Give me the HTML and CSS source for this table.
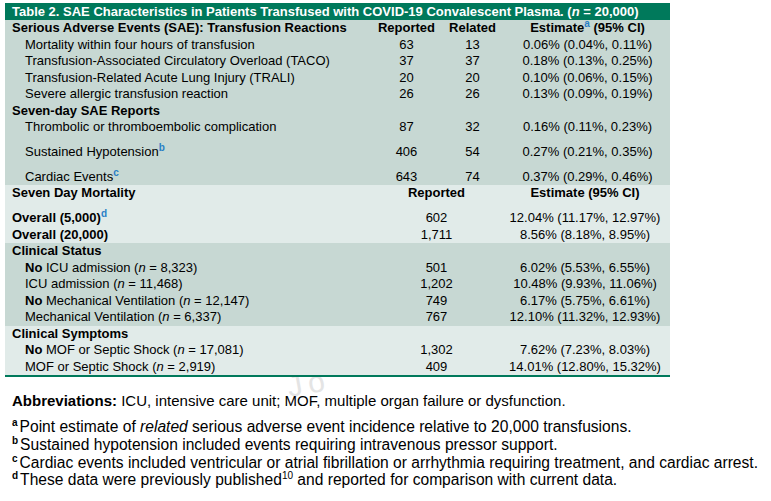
FILE: index.html
```html
<!DOCTYPE html>
<html>
<head>
<meta charset="utf-8">
<link rel="stylesheet" href="styles.css">
</head>
<body>
<div class="watermark">Jo</div>
<div class="tbl">
  <div class="title">Table 2. SAE Characteristics in Patients Transfused with COVID-19 Convalescent Plasma. (<i>n</i> = 20,000)</div>
  <div class="sec dark">
    <div class="row r4 hd"><span class="lbl">Serious Adverse Events (SAE): Transfusion Reactions</span><span class="c">Reported</span><span class="c">Related</span><span class="c">Estimate<sup>a</sup> (95% CI)</span></div>
    <div class="row r4"><span class="lbl ind">Mortality within four hours of transfusion</span><span class="c">63</span><span class="c">13</span><span class="c">0.06% (0.04%, 0.11%)</span></div>
    <div class="row r4"><span class="lbl ind">Transfusion-Associated Circulatory Overload (TACO)</span><span class="c">37</span><span class="c">37</span><span class="c">0.18% (0.13%, 0.25%)</span></div>
    <div class="row r4"><span class="lbl ind">Transfusion-Related Acute Lung Injury (TRALI)</span><span class="c">20</span><span class="c">20</span><span class="c">0.10% (0.06%, 0.15%)</span></div>
    <div class="row r4"><span class="lbl ind">Severe allergic transfusion reaction</span><span class="c">26</span><span class="c">26</span><span class="c">0.13% (0.09%, 0.19%)</span></div>
    <div class="row r4 hd"><span class="lbl">Seven-day SAE Reports</span><span></span><span></span><span></span></div>
    <div class="row r4"><span class="lbl ind">Thrombolic or thromboembolic complication</span><span class="c">87</span><span class="c">32</span><span class="c">0.16% (0.11%, 0.23%)</span></div>
    <div class="row r4 tall"><span class="lbl ind">Sustained Hypotension<sup>b</sup></span><span class="c">406</span><span class="c">54</span><span class="c">0.27% (0.21%, 0.35%)</span></div>
    <div class="row r4 tall"><span class="lbl ind">Cardiac Events<sup>c</sup></span><span class="c">643</span><span class="c">74</span><span class="c">0.37% (0.29%, 0.46%)</span></div>
  </div>
  <div class="sec light">
    <div class="row r3 hd"><span class="lbl">Seven Day Mortality</span><span class="c">Reported</span><span class="c">Estimate (95% CI)</span></div>
    <div class="row r3 tall b"><span class="lbl">Overall (5,000)<sup>d</sup></span><span class="c">602</span><span class="c">12.04% (11.17%, 12.97%)</span></div>
    <div class="row r3 b"><span class="lbl">Overall (20,000)</span><span class="c">1,711</span><span class="c">8.56% (8.18%, 8.95%)</span></div>
  </div>
  <div class="sec dark">
    <div class="row r3 hd"><span class="lbl">Clinical Status</span><span></span><span></span></div>
    <div class="row r3"><span class="lbl ind"><b>No</b> ICU admission (<i>n</i> = 8,323)</span><span class="c">501</span><span class="c">6.02% (5.53%, 6.55%)</span></div>
    <div class="row r3"><span class="lbl ind">ICU admission (<i>n</i> = 11,468)</span><span class="c">1,202</span><span class="c">10.48% (9.93%, 11.06%)</span></div>
    <div class="row r3"><span class="lbl ind"><b>No</b> Mechanical Ventilation (<i>n</i> = 12,147)</span><span class="c">749</span><span class="c">6.17% (5.75%, 6.61%)</span></div>
    <div class="row r3"><span class="lbl ind">Mechanical Ventilation (<i>n</i> = 6,337)</span><span class="c">767</span><span class="c">12.10% (11.32%, 12.93%)</span></div>
  </div>
  <div class="sec light last">
    <div class="row r3 hd"><span class="lbl">Clinical Symptoms</span><span></span><span></span></div>
    <div class="row r3"><span class="lbl ind"><b>No</b> MOF or Septic Shock (<i>n</i> = 17,081)</span><span class="c">1,302</span><span class="c">7.62% (7.23%, 8.03%)</span></div>
    <div class="row r3"><span class="lbl ind">MOF or Septic Shock (<i>n</i> = 2,919)</span><span class="c">409</span><span class="c">14.01% (12.80%, 15.32%)</span></div>
  </div>
</div>
<div class="notes">
  <p class="abbr"><b>Abbreviations:</b> ICU, intensive care unit; MOF, multiple organ failure or dysfunction.</p>
  <p class="fn"><sup>a</sup>Point estimate of <i>related</i> serious adverse event incidence relative to 20,000 transfusions.</p>
  <p class="fn"><sup>b</sup>Sustained hypotension included events requiring intravenous pressor support.</p>
  <p class="fn"><sup>c</sup>Cardiac events included ventricular or atrial fibrillation or arrhythmia requiring treatment, and cardiac arrest.</p>
  <p class="fn"><sup>d</sup>These data were previously published<span class="ref">10</span> and reported for comparison with current data.</p>
</div>
</body>
</html>
```
FILE: styles.css
```css
html { margin: 0; padding: 0; background: #fff; }
body { margin: 0; padding: 3px 0 0 5px; font-family: "Liberation Sans", Arial, sans-serif; color: #000; position: relative; }
.watermark {
  position: absolute; z-index: -1; left: 290px; top: 372px;
  font-size: 30px; line-height: 30px; letter-spacing: 6px; color: #e4e4e4; white-space: nowrap;
  transform: rotate(-10deg); transform-origin: left bottom;
}
.tbl { width: 665px; font-size: 13px; }
.title { background: #00795b; color: #fff; font-weight: bold; font-size: 13px; height: 17px; line-height: 17px; padding-left: 7px; white-space: nowrap; }
.sec.dark { background: #c7d8d3; }
.sec.light { background: #e1ebe9; }
.sec.last { border-bottom: 2px solid #00795b; }
.row { display: grid; height: 16.5px; line-height: 16.5px; white-space: nowrap; }
.r4 { grid-template-columns: 368px 67px 65px 1fr; }
.r3 { grid-template-columns: 368px 127px 1fr; }
.row.tall { height: 16.5px; padding-top: 8.4px; }
.hd, .b .lbl { font-weight: bold; }
.lbl { padding-left: 7px; }
.lbl.ind { padding-left: 20px; }
.c { text-align: center; }
sup { font-size: 10px; color: #2a7fc6; font-weight: bold; line-height: 0; vertical-align: 5px; }
.notes { font-size: 15px; margin-top: 15px; padding-left: 7px; }
.notes p { margin: 0; line-height: 17.7px; white-space: nowrap; }
.notes .abbr { margin-bottom: 8.5px; }
.notes .fn { font-size: 15.6px; }
.notes sup { color: #000; font-size: 10px; vertical-align: 6px; margin-right: 2px; }
.notes .ref { font-size: 10px; vertical-align: 6px; line-height: 0; }
```
